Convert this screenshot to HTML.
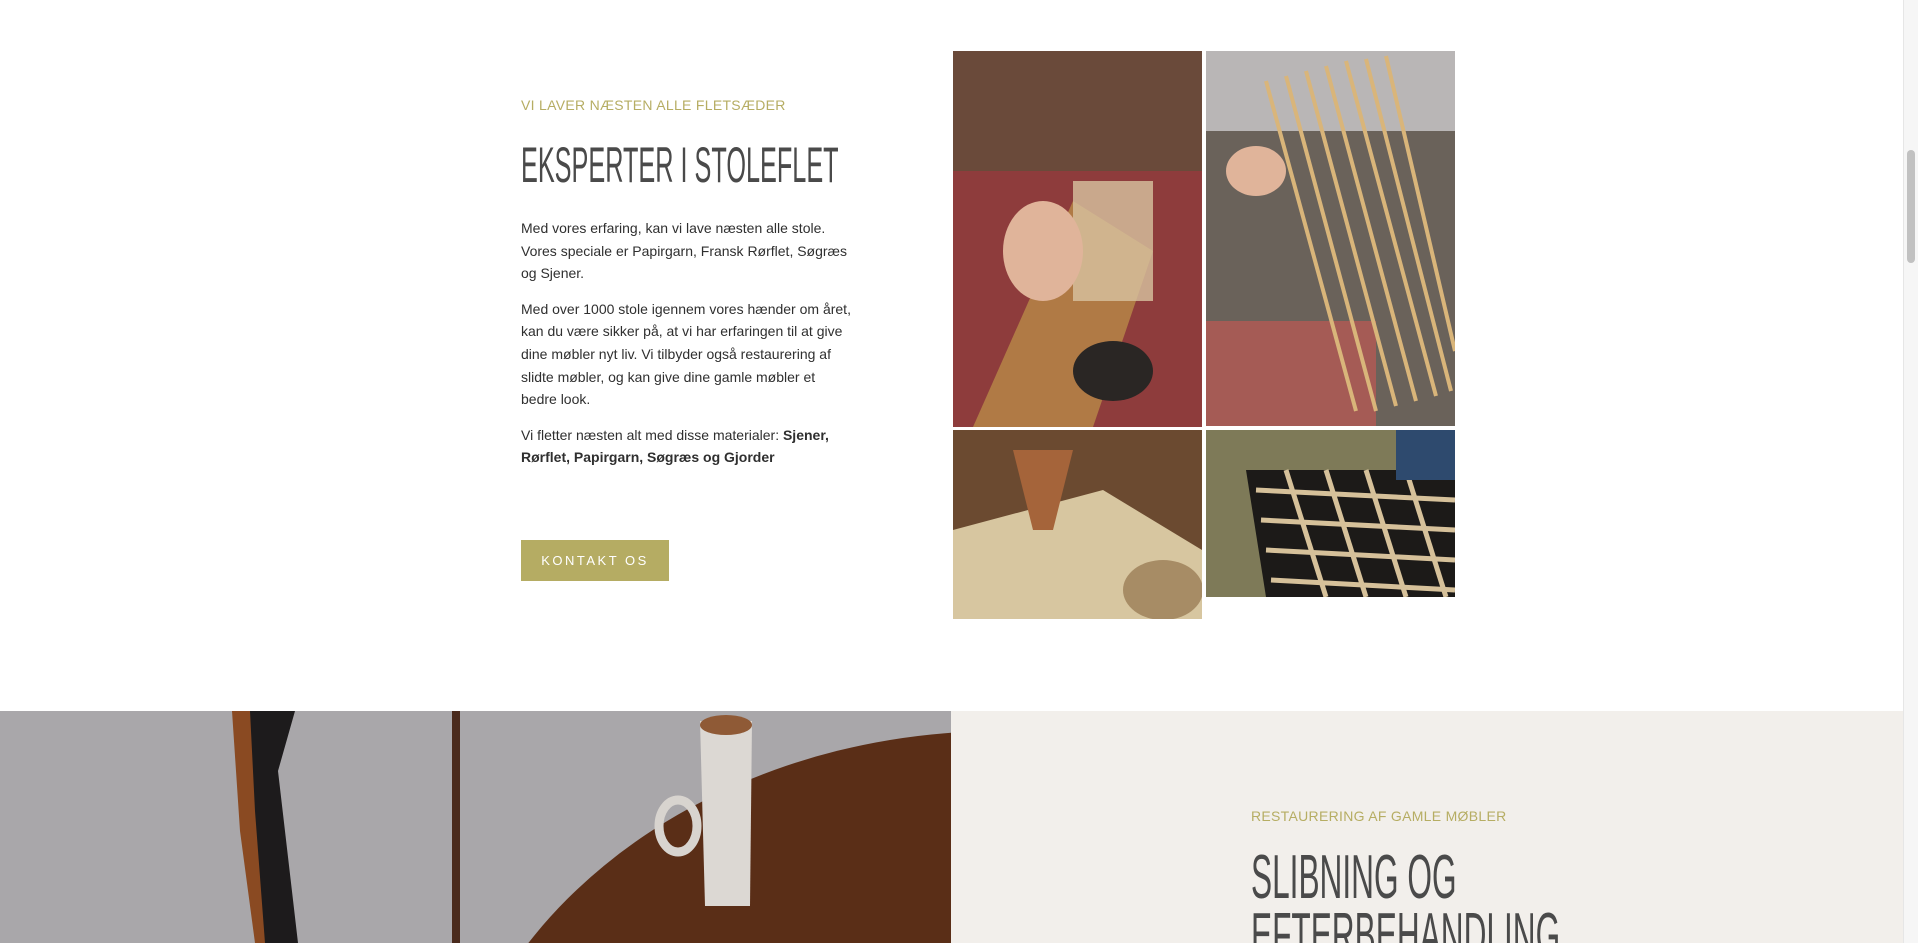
<!DOCTYPE html>
<html><head><meta charset="utf-8"><style>
html,body{margin:0;padding:0;width:1918px;height:943px;overflow:hidden;background:#fff;font-family:"Liberation Sans",sans-serif;position:relative}
.abs{position:absolute}
.eyebrow{color:#b6ad63;font-size:14px;letter-spacing:0.3px}
.h{color:#4a4a4a;font-weight:normal;white-space:nowrap;transform-origin:0 0}
p{margin:0;font-size:14px;line-height:22.6px;color:#2f2f2f;white-space:nowrap}
</style></head><body>
<div class="abs eyebrow" style="left:521px;top:97px">VI LAVER NÆSTEN ALLE FLETSÆDER</div>
<div class="abs h" style="left:521px;top:136px;font-size:50px;transform:scaleX(0.505)">EKSPERTER I STOLEFLET</div>
<div class="abs" style="left:521px;top:217px;width:340px">
<p>Med vores erfaring, kan vi lave næsten alle stole.<br>Vores speciale er Papirgarn, Fransk Rørflet, Søgræs<br>og Sjener.</p>
<p style="margin-top:13px">Med over 1000 stole igennem vores hænder om året,<br>kan du være sikker på, at vi har erfaringen til at give<br>dine møbler nyt liv. Vi tilbyder også restaurering af<br>slidte møbler, og kan give dine gamle møbler et<br>bedre look.</p>
<p style="margin-top:13px">Vi fletter næsten alt med disse materialer: <b>Sjener,</b><br><b>Rørflet, Papirgarn, Søgræs og Gjorder</b></p>
</div>
<div class="abs" style="left:521px;top:540px;width:148px;height:41px;background:#b5ac63;color:#fff;font-size:13px;letter-spacing:2.5px;text-align:center;line-height:41px">KONTAKT OS</div>

<svg class="abs" style="left:953px;top:51px" width="249" height="376"><rect width="249" height="376" fill="#8e3c3c"/><rect x="0" y="0" width="249" height="120" fill="#6a4a3a"/><path d="M20 376 L120 150 L200 200 L140 376Z" fill="#b07a45"/><rect x="120" y="130" width="80" height="120" fill="#d8c3a0" opacity=".8"/><ellipse cx="90" cy="200" rx="40" ry="50" fill="#e0b49a"/><ellipse cx="160" cy="320" rx="40" ry="30" fill="#2a2624"/></svg>
<svg class="abs" style="left:1206px;top:51px" width="249" height="375"><rect width="249" height="375" fill="#6a625a"/><rect x="0" y="0" width="249" height="80" fill="#b9b6b6"/><rect x="0" y="270" width="170" height="105" fill="#a55b55"/><g stroke="#d9b57a" stroke-width="4"><path d="M60 30 L150 360"/><path d="M80 25 L170 360"/><path d="M100 20 L190 355"/><path d="M120 15 L210 350"/><path d="M140 10 L230 345"/><path d="M160 8 L245 340"/><path d="M180 5 L249 300"/></g><ellipse cx="50" cy="120" rx="30" ry="25" fill="#e0b49a"/></svg>
<svg class="abs" style="left:953px;top:430px" width="249" height="189"><rect width="249" height="189" fill="#6b4a30"/><path d="M0 100 L150 60 L249 120 L249 189 L0 189Z" fill="#d7c6a0"/><path d="M60 20 L120 20 L100 100 L80 100Z" fill="#a5643a"/><ellipse cx="210" cy="160" rx="40" ry="30" fill="#a78c65"/></svg>
<svg class="abs" style="left:1206px;top:430px" width="249" height="167"><rect width="249" height="167" fill="#7e7a58"/><path d="M40 40 L249 40 L249 167 L60 167Z" fill="#1c1a18"/><g stroke="#d6c19a" stroke-width="5"><path d="M50 60 L249 70"/><path d="M55 90 L249 100"/><path d="M60 120 L249 130"/><path d="M65 150 L249 160"/><path d="M80 40 L120 167"/><path d="M120 40 L160 167"/><path d="M160 40 L200 167"/><path d="M200 40 L240 167"/></g><rect x="190" y="0" width="59" height="50" fill="#2e4a6e"/></svg>

<svg class="abs" style="left:0;top:711px" width="951" height="232"><rect width="951" height="232" fill="#a9a7aa"/><ellipse cx="1000" cy="480" rx="560" ry="460" fill="#5a2e17"/><path d="M232 0 L262 0 L262 70 L280 232 L255 232 L240 120 Z" fill="#8a4a22"/><path d="M250 0 L295 0 L278 60 L298 232 L265 232 L255 100Z" fill="#1d1b1c"/><rect x="452" y="0" width="8" height="232" fill="#4a2a1c"/><path d="M700 10 L752 10 L750 195 L705 195Z" fill="#dcd8d3"/><ellipse cx="726" cy="14" rx="26" ry="10" fill="#8f5a36"/><ellipse cx="678" cy="115" rx="19" ry="26" fill="none" stroke="#d8d4cf" stroke-width="9"/></svg>
<div class="abs" style="left:951px;top:711px;width:952px;height:232px;background:#f2efeb"></div>
<div class="abs eyebrow" style="left:1251px;top:808px">RESTAURERING AF GAMLE MØBLER</div>
<div class="abs h" style="left:1251px;top:849px;font-size:62px;line-height:58px;transform:scaleX(0.51)">SLIBNING OG<br>EFTERBEHANDLING</div>

<div class="abs" style="left:1903px;top:0;width:15px;height:943px;background:#f6f6f6;border-left:1px solid #e6e6e6"></div>
<div class="abs" style="left:1907px;top:150px;width:8px;height:113px;background:#c1c1c1;border-radius:4px"></div>
</body></html>
